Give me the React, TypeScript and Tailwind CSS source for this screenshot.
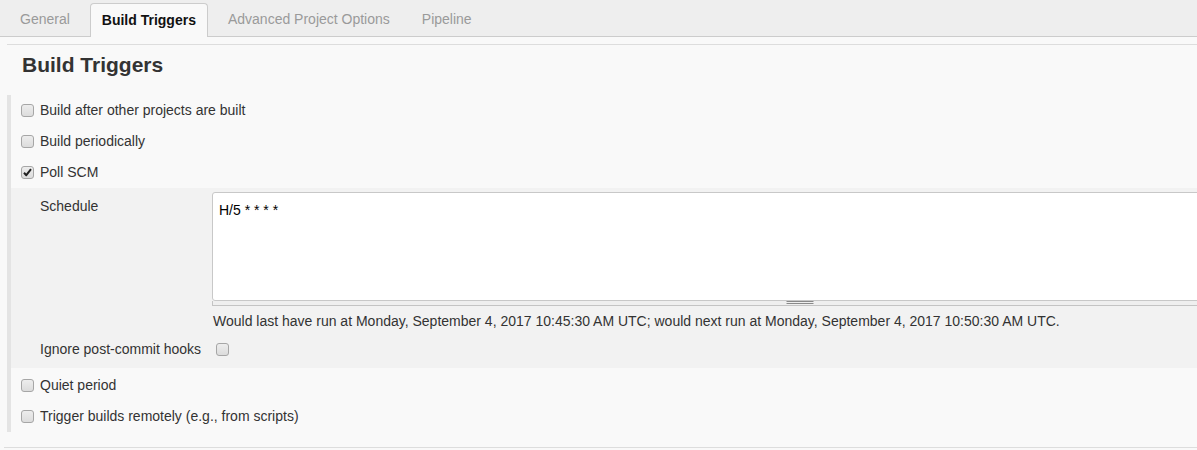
import React from "react";

function Box({ checked = false }: { checked?: boolean }) {
  return (
    <span className="relative inline-block w-[13px] h-[13px] shrink-0 rounded-[3px] border border-[#a6a6a6] bg-gradient-to-b from-[#ededed] to-[#dcdcdc]">
      {checked && (
        <svg viewBox="0 0 13 13" className="absolute left-[-1px] top-[-1px] w-[13px] h-[13px]">
          <path d="M3 6.8 L5.3 9.2 L10 3.2" fill="none" stroke="#222" strokeWidth="2" strokeLinejoin="round" />
        </svg>
      )}
    </span>
  );
}

function Row({ label, checked = false }: { label: string; checked?: boolean }) {
  return (
    <div className="flex items-center h-[31px] pl-[10px] gap-[6px]">
      <Box checked={checked} />
      <span>{label}</span>
    </div>
  );
}

export default function App() {
  return (
    <div
      className="w-[1197px] h-[450px] overflow-hidden bg-[#f9f9f9] text-[14px] text-[#333]"
      style={{ fontFamily: '"Liberation Sans", Arial, sans-serif' }}
    >
      <div className="flex items-end h-[37px] bg-[#eeeeee] border-b border-[#cccccc] pl-[8px] gap-[8px]">
        <div className="h-[33px] flex items-center px-[12px] text-[#9a9a9a]">General</div>
        <div className="h-[34px] mb-[-1px] flex items-center px-[11px] bg-[#f9f9f9] border border-b-0 border-[#cccccc] rounded-t-[4px] font-bold text-[#111]">
          Build Triggers
        </div>
        <div className="h-[33px] flex items-center px-[12px] text-[#9a9a9a]">Advanced Project Options</div>
        <div className="h-[33px] flex items-center px-[12px] text-[#9a9a9a]">Pipeline</div>
      </div>
      <div className="ml-[7px] mt-[7px] h-px bg-[#dddddd]" />
      <div className="pl-[22px] mt-[6px] leading-[28px] text-[21px] font-bold text-[#333]">Build Triggers</div>
      <div className="ml-[7px] mt-[16px] border-l-4 border-[#e4e4e4]">
        <Row label="Build after other projects are built" />
        <Row label="Build periodically" />
        <Row label="Poll SCM" checked />
        <div className="bg-[#f2f2f2] pt-[4px] pb-[6px]">
          <div className="flex">
            <div className="w-[201px] shrink-0 pl-[29px] pt-[4px]">Schedule</div>
            <div className="w-[1176px] shrink-0">
              <div className="h-[109px] bg-white border border-[#c8c8c8] rounded-[3px] px-[6px] pt-[7px] text-black">
                H/5 * * * *
              </div>
              <div className="relative h-[5px] border-x border-b border-[#c4c4c4] bg-[#efefef]">
                <div className="absolute left-1/2 -translate-x-1/2 top-[0px] w-[27px] h-[3px] border-y border-[#8a8a8a]" />
              </div>
              <div className="pl-[1px] pt-[7px] leading-[16px]">
                Would last have run at Monday, September 4, 2017 10:45:30 AM UTC; would next run at Monday, September 4, 2017 10:50:30 AM UTC.
              </div>
            </div>
          </div>
          <div className="flex items-center h-[26px] mt-[7px]">
            <div className="w-[205px] shrink-0 pl-[29px]">Ignore post-commit hooks</div>
            <Box />
          </div>
        </div>
        <div className="h-[2px]" />
        <Row label="Quiet period" />
        <Row label="Trigger builds remotely (e.g., from scripts)" />
      </div>
      <div className="ml-[4px] mt-[15px] h-px bg-[#dddddd]" />
    </div>
  );
}
